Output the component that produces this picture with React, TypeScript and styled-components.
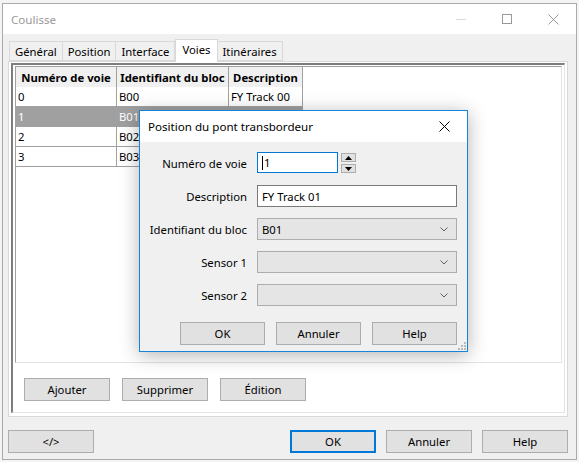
import styled, { createGlobalStyle } from "styled-components";

const UI_FONT = `"Noto Sans", "Open Sans", "Liberation Sans", sans-serif`;
const UI_SIZE = "11.3px";

const GlobalStyle = createGlobalStyle`
  html, body {
    margin: 0;
    padding: 0;
    background: #f4f4f4;
  }
  body {
    font-family: ${UI_FONT};
    font-size: ${UI_SIZE};
    color: #000;
  }
`;

const Page = styled.div`
  position: relative;
  width: 579px;
  height: 462px;
  overflow: hidden;
  padding: 3px 0 0 2px;
  box-sizing: border-box;
`;

const Window = styled.div`
  width: 575px;
  height: 457px;
  box-sizing: border-box;
  border: 1px solid #aaaaaa;
  display: flex;
  flex-direction: column;
  background: #f0f0f0;
`;

const TitleBar = styled.div<{ $height: number }>`
  height: ${(p) => p.$height}px;
  flex: none;
  background: #fff;
  display: flex;
  align-items: center;
`;

const WindowTitle = styled.span<{ $active?: boolean }>`
  flex: 1;
  padding-left: 8px;
  color: ${(p) => (p.$active ? "#000" : "#999")};
  font-size: 11.6px;
`;

const CaptionButton = styled.div`
  width: 46px;
  height: 100%;
  display: flex;
  align-items: center;
  justify-content: center;
`;

const Body = styled.div`
  flex: 1;
  display: flex;
  flex-direction: column;
  padding: 5px 8px 6px 5px;
`;

const TabStrip = styled.div`
  height: 22px;
  display: flex;
  align-items: flex-end;
  padding-left: 1px;
  position: relative;
  z-index: 1;
`;

const Tab = styled.div<{ $selected?: boolean }>`
  box-sizing: border-box;
  height: ${(p) => (p.$selected ? 23 : 20)}px;
  margin-bottom: ${(p) => (p.$selected ? -1 : 0)}px;
  padding: ${(p) => (p.$selected ? "0 6px 3px" : "0 5px")};
  border: 1px solid #d9d9d9;
  border-bottom: ${(p) => (p.$selected ? "none" : "1px solid #d9d9d9")};
  border-left: ${(p) => (p.$selected ? "1px solid #d9d9d9" : "none")};
  background: ${(p) => (p.$selected ? "#fff" : "#f0f0f0")};
  display: flex;
  align-items: center;
  white-space: nowrap;
  &:first-child {
    border-left: 1px solid #d9d9d9;
  }
`;

const TabPanel = styled.div`
  height: 356px;
  box-sizing: border-box;
  border: 1px solid #d9d9d9;
  background: #fff;
  display: flex;
  flex-direction: column;
  padding: 1px 2px 3px 2px;
`;

const SunkenFrame = styled.div`
  flex: 1;
  border-left: 2px solid #7d7d7d;
  border-top: 2px solid #7d7d7d;
  border-right: 1px solid #e3e3e3;
  border-bottom: 1px solid #e3e3e3;
  padding: 1px 2px 0 2px;
  display: flex;
  flex-direction: column;
`;

const GridBox = styled.div`
  height: 297px;
  box-sizing: border-box;
  border-left: 1px solid #a0a0a0;
  border-top: 1px solid #a0a0a0;
  border-right: 1px solid #e3e3e3;
  border-bottom: 1px solid #e3e3e3;
  background: #fff;
`;

const Grid = styled.div`
  display: grid;
  grid-template-columns: 101px 112px 74px;
  grid-auto-rows: 20px;
  width: max-content;
`;

const HeaderCell = styled.div`
  height: 21px;
  box-sizing: border-box;
  background: #f0f0f0;
  border-right: 1px solid #a0a0a0;
  border-bottom: 1px solid #a0a0a0;
  font-weight: bold;
  display: flex;
  align-items: center;
  justify-content: center;
  white-space: nowrap;
  overflow: hidden;
`;

const Cell = styled.div<{ $selected?: boolean }>`
  box-sizing: border-box;
  border-right: 1px solid #a0a0a0;
  border-bottom: 1px solid #a0a0a0;
  background: ${(p) => (p.$selected ? "#a0a0a0" : "#fff")};
  color: ${(p) => (p.$selected ? "#fff" : "#000")};
  padding-left: 2px;
  display: flex;
  align-items: center;
  white-space: nowrap;
  overflow: hidden;
`;

const ButtonRow = styled.div<{ $justify?: string; $gap: number }>`
  display: flex;
  justify-content: ${(p) => p.$justify ?? "flex-start"};
  gap: ${(p) => p.$gap}px;
`;

const FrameButtons = styled(ButtonRow)`
  padding: 15px 0 0 9px;
`;

const FooterButtons = styled(ButtonRow)`
  margin-top: 13px;
`;

const PushButton = styled.button<{ $default?: boolean; $width?: number }>`
  width: ${(p) => p.$width ?? 86}px;
  height: 23px;
  box-sizing: border-box;
  margin: 0;
  padding: 0;
  background: #e1e1e1;
  border: ${(p) => (p.$default ? "2px solid #0078d7" : "1px solid #adadad")};
  font-family: ${UI_FONT};
  font-size: ${UI_SIZE};
  color: #000;
`;

const Spacer = styled.div`
  flex: 1;
`;

/* ---- modal dialog ---- */

const Dialog = styled.div`
  position: absolute;
  left: 139px;
  top: 110px;
  width: 329px;
  height: 242px;
  box-sizing: border-box;
  border: 1px solid #1883d7;
  background: #f0f0f0;
  box-shadow: 0 3px 18px rgba(0, 0, 0, 0.3);
  display: flex;
  flex-direction: column;
`;

const Form = styled.div`
  display: grid;
  grid-template-columns: 107px 200px;
  grid-auto-rows: 22px;
  column-gap: 10px;
  row-gap: 11px;
  padding-top: 10px;
`;

const FieldLabel = styled.label`
  display: flex;
  align-items: center;
  justify-content: flex-end;
  white-space: nowrap;
`;

const SpinRow = styled.div`
  display: flex;
  align-items: flex-start;
  gap: 3px;
`;

const TextBox = styled.div<{ $focused?: boolean; $width?: number }>`
  width: ${(p) => (p.$width ? `${p.$width}px` : "100%")};
  height: ${(p) => (p.$focused ? 21 : 22)}px;
  box-sizing: border-box;
  background: #fff;
  border: 1px solid ${(p) => (p.$focused ? "#0078d7" : "#7a7a7a")};
  padding-left: 4px;
  display: flex;
  align-items: center;
`;

const Caret = styled.span`
  width: 1px;
  height: 14px;
  background: #000;
  margin-right: 1px;
`;

const Spinner = styled.div`
  display: flex;
  flex-direction: column;
  gap: 2px;
  padding-top: 1px;
`;

const SpinButton = styled.div`
  width: 15px;
  height: 9px;
  box-sizing: border-box;
  background: #e1e1e1;
  border: 1px solid #adadad;
  display: flex;
  align-items: center;
  justify-content: center;
`;

const Combo = styled.div`
  height: 22px;
  box-sizing: border-box;
  background: #e5e5e5;
  border: 1px solid #adadad;
  padding: 0 8px 0 4px;
  display: flex;
  align-items: center;
  justify-content: space-between;
`;

const DialogButtons = styled(ButtonRow)`
  padding: 16px 10px 0 0;
`;

const Grip = styled.svg`
  position: absolute;
  right: 1px;
  bottom: 1px;
`;

function Chevron() {
  return (
    <svg width="8" height="5" viewBox="0 0 8 5">
      <path d="M0.5 0.5 L4 4 L7.5 0.5" fill="none" stroke="#606060" strokeWidth="1" />
    </svg>
  );
}

function CloseGlyph({ color, size }: { color: string; size: number }) {
  return (
    <svg width={size} height={size} viewBox={`0 0 ${size} ${size}`}>
      <path
        d={`M0.5 0.5 L${size - 0.5} ${size - 0.5} M${size - 0.5} 0.5 L0.5 ${size - 0.5}`}
        stroke={color}
        strokeWidth="1"
      />
    </svg>
  );
}

const rows = [
  { voie: "0", bloc: "B00", desc: "FY Track 00" },
  { voie: "1", bloc: "B01", desc: "FY Track 01" },
  { voie: "2", bloc: "B02", desc: "FY Track 02" },
  { voie: "3", bloc: "B03", desc: "FY Track 03" },
];

const tabs = ["Général", "Position", "Interface", "Voies", "Itinéraires"];

export default function App() {
  return (
    <Page>
      <GlobalStyle />
      <Window>
        <TitleBar $height={30}>
          <WindowTitle>Coulisse</WindowTitle>
          <CaptionButton>
            <svg width="10" height="1" viewBox="0 0 10 1">
              <rect width="10" height="1" fill="#dadada" />
            </svg>
          </CaptionButton>
          <CaptionButton>
            <svg width="10" height="10" viewBox="0 0 10 10">
              <rect x="0.5" y="0.5" width="9" height="9" fill="none" stroke="#999" />
            </svg>
          </CaptionButton>
          <CaptionButton>
            <CloseGlyph color="#999" size={11} />
          </CaptionButton>
        </TitleBar>
        <Body>
          <TabStrip>
            {tabs.map((t) => (
              <Tab key={t} $selected={t === "Voies"}>
                {t}
              </Tab>
            ))}
          </TabStrip>
          <TabPanel>
            <SunkenFrame>
              <GridBox>
                <Grid>
                  <HeaderCell>Numéro de voie</HeaderCell>
                  <HeaderCell>Identifiant du bloc</HeaderCell>
                  <HeaderCell>Description</HeaderCell>
                  {rows.flatMap((r, i) => [
                    <Cell key={`v${i}`} $selected={i === 1}>{r.voie}</Cell>,
                    <Cell key={`b${i}`} $selected={i === 1}>{r.bloc}</Cell>,
                    <Cell key={`d${i}`} $selected={i === 1}>{r.desc}</Cell>,
                  ])}
                </Grid>
              </GridBox>
              <FrameButtons $gap={12}>
                <PushButton>Ajouter</PushButton>
                <PushButton>Supprimer</PushButton>
                <PushButton>Édition</PushButton>
              </FrameButtons>
            </SunkenFrame>
          </TabPanel>
          <FooterButtons $gap={10}>
            <PushButton>&lt;/&gt;</PushButton>
            <Spacer />
            <PushButton $default>OK</PushButton>
            <PushButton>Annuler</PushButton>
            <PushButton>Help</PushButton>
          </FooterButtons>
        </Body>
      </Window>

      <Dialog>
        <TitleBar $height={31}>
          <WindowTitle $active>Position du pont transbordeur</WindowTitle>
          <CaptionButton>
            <CloseGlyph color="#000" size={11} />
          </CaptionButton>
        </TitleBar>
        <Form>
          <FieldLabel>Numéro de voie</FieldLabel>
          <SpinRow>
            <TextBox $focused $width={81}>
              <Caret />1
            </TextBox>
            <Spinner>
              <SpinButton>
                <svg width="7" height="4" viewBox="0 0 7 4">
                  <path d="M0 4 L3.5 0 L7 4 Z" fill="#000" />
                </svg>
              </SpinButton>
              <SpinButton>
                <svg width="7" height="4" viewBox="0 0 7 4">
                  <path d="M0 0 L3.5 4 L7 0 Z" fill="#000" />
                </svg>
              </SpinButton>
            </Spinner>
          </SpinRow>
          <FieldLabel>Description</FieldLabel>
          <TextBox>FY Track 01</TextBox>
          <FieldLabel>Identifiant du bloc</FieldLabel>
          <Combo>
            B01
            <Chevron />
          </Combo>
          <FieldLabel>Sensor 1</FieldLabel>
          <Combo>
            <span />
            <Chevron />
          </Combo>
          <FieldLabel>Sensor 2</FieldLabel>
          <Combo>
            <span />
            <Chevron />
          </Combo>
        </Form>
        <DialogButtons $gap={11} $justify="flex-end">
          <PushButton $width={85}>OK</PushButton>
          <PushButton $width={85}>Annuler</PushButton>
          <PushButton $width={85}>Help</PushButton>
        </DialogButtons>
        <Grip width="10" height="10" viewBox="0 0 10 10">
          <g fill="#b8b8b8">
            <rect x="8" y="2" width="2" height="2" />
            <rect x="5" y="5" width="2" height="2" />
            <rect x="8" y="5" width="2" height="2" />
            <rect x="2" y="8" width="2" height="2" />
            <rect x="5" y="8" width="2" height="2" />
            <rect x="8" y="8" width="2" height="2" />
          </g>
        </Grip>
      </Dialog>
    </Page>
  );
}
